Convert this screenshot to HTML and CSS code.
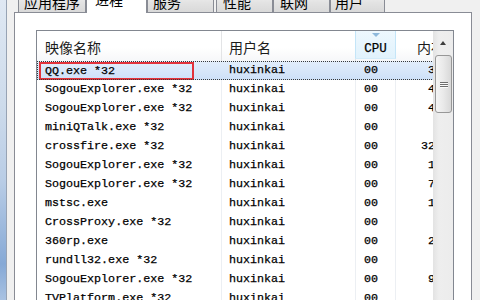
FILE: index.html
```html
<!DOCTYPE html>
<html>
	<head>
		<meta charset="utf-8">
		<title>Windows 任务管理器 - 进程</title>
		<link rel="stylesheet" href="styles.css">
	</head>
	<body>
		<div class="frame"></div>

		<div class="window">

			<div class="tabs">
				<div class="tab t1">应用程序</div>
				<div class="tab t2 active">进程</div>
				<div class="tab t3">服务</div>
				<div class="tab t4">性能</div>
				<div class="tab t5">联网</div>
				<div class="tab t6">用户</div>
			</div>

			<div class="panel">
				<div class="listview">

					<div class="lv-main">
						<div class="lv-head">
							<div class="hcell">映像名称</div>
							<div class="hcell">用户名</div>
							<div class="hcell sorted"><span class="sort-arrow"></span><span class="mono">CPU</span></div>
							<div class="hcell mem">内存(专用工作集)</div>
						</div>

						<div class="lv-body">
							<div class="row sel">
								<div class="cell name"><span class="mark">QQ.exe *32</span></div>
								<div class="cell">huxinkai</div>
								<div class="cell">00</div>
								<div class="cell num">3,416 K</div>
							</div>
							<div class="row">
								<div class="cell name">SogouExplorer.exe *32</div>
								<div class="cell">huxinkai</div>
								<div class="cell">00</div>
								<div class="cell num">4,028 K</div>
							</div>
							<div class="row">
								<div class="cell name">SogouExplorer.exe *32</div>
								<div class="cell">huxinkai</div>
								<div class="cell">00</div>
								<div class="cell num">4,552 K</div>
							</div>
							<div class="row">
								<div class="cell name">miniQTalk.exe *32</div>
								<div class="cell">huxinkai</div>
								<div class="cell">00</div>
								<div class="cell num">812 K</div>
							</div>
							<div class="row">
								<div class="cell name">crossfire.exe *32</div>
								<div class="cell">huxinkai</div>
								<div class="cell">00</div>
								<div class="cell num">32,860 K</div>
							</div>
							<div class="row">
								<div class="cell name">SogouExplorer.exe *32</div>
								<div class="cell">huxinkai</div>
								<div class="cell">00</div>
								<div class="cell num">1,904 K</div>
							</div>
							<div class="row">
								<div class="cell name">SogouExplorer.exe *32</div>
								<div class="cell">huxinkai</div>
								<div class="cell">00</div>
								<div class="cell num">7,236 K</div>
							</div>
							<div class="row">
								<div class="cell name">mstsc.exe</div>
								<div class="cell">huxinkai</div>
								<div class="cell">00</div>
								<div class="cell num">1,108 K</div>
							</div>
							<div class="row">
								<div class="cell name">CrossProxy.exe *32</div>
								<div class="cell">huxinkai</div>
								<div class="cell">00</div>
								<div class="cell num">644 K</div>
							</div>
							<div class="row">
								<div class="cell name">360rp.exe</div>
								<div class="cell">huxinkai</div>
								<div class="cell">00</div>
								<div class="cell num">2,372 K</div>
							</div>
							<div class="row">
								<div class="cell name">rundll32.exe *32</div>
								<div class="cell">huxinkai</div>
								<div class="cell">00</div>
								<div class="cell num">528 K</div>
							</div>
							<div class="row">
								<div class="cell name">SogouExplorer.exe *32</div>
								<div class="cell">huxinkai</div>
								<div class="cell">00</div>
								<div class="cell num">9,540 K</div>
							</div>
							<div class="row">
								<div class="cell name">TVPlatform.exe *32</div>
								<div class="cell">huxinkai</div>
								<div class="cell">00</div>
								<div class="cell num">716 K</div>
							</div>
						</div>
					</div>

					<div class="vscroll">
						<div class="sb-up"><span class="sb-arrow"></span></div>
						<div class="sb-thumb">
							<span class="grip"></span>
							<span class="grip"></span>
							<span class="grip"></span>
						</div>
					</div>

				</div>
			</div>

		</div>
	</body>
</html>
```

FILE: styles.css
```css
*{
	box-sizing: border-box;
}
html, body{
	margin: 0;
	padding: 0;
}
body{
	width: 480px;
	height: 300px;
	overflow: hidden;
	display: flex;
	background: #f0f0f0;
	font-family: "Noto Sans CJK SC", sans-serif;
}

/* aero glass edge on the left */
.frame{
	width: 7px;
	flex: none;
	border-right: 1px solid #97a3b4;
	background: linear-gradient(to bottom, #dfe8f3 0%, #cddbeb 35%, #b9cde6 60%, #86a9d6 88%, #a9c2e2 100%);
}

.window{
	flex: 1;
	display: flex;
	flex-direction: column;
	padding: 0 8px 0 7px;
	background: #f0f0f0;
	overflow: hidden;
}

/* ---- tabs ---- */
.tabs{
	display: flex;
	align-items: flex-end;
	height: 23px;
	margin-top: -10px;
	margin-bottom: -1px;
	padding-left: 4px;
	position: relative;
	z-index: 2;
	flex: none;
}
.tab{
	height: 20px;
	margin-bottom: 1px;
	padding-left: 5px;
	padding-top: 1px;
	border: 1px solid #898c95;
	border-bottom: none;
	border-radius: 2px 2px 0 0;
	background: linear-gradient(to bottom, #f2f2f2, #e3e3e3 50%, #d9d9d9);
	font-size: 14px;
	line-height: 16px;
	color: #000;
	white-space: nowrap;
	overflow: hidden;
}
.tab.active{
	height: 23px;
	margin-bottom: 0;
	padding-left: 8px;
	padding-top: 0;
	background: #fff;
}
.t1{ width: 68px; }
.t2{ width: 61px; }
.t3{ width: 67px; }
.t4{ width: 57px; margin-left: 2px; padding-left: 6px; }
.t5{ width: 57px; padding-left: 6px; }
.t6{ width: 55px; padding-left: 4px; }

/* ---- tab page ---- */
.panel{
	flex: 1;
	border: 1px solid #898c95;
	background: #fff;
	padding: 17px 17px 0 21px;
	position: relative;
	z-index: 1;
}

.listview{
	display: flex;
	height: 300px;
	border: 1px solid #828790;
	background: #fff;
}
.lv-main{
	flex: 1;
	overflow: hidden;
}

.lv-head, .row{
	display: grid;
	grid-template-columns: 185px 134px 40px 94px;
	width: 453px;
}
.lv-head{
	height: 30px;
	background: linear-gradient(to bottom, #fff 55%, #f6f7f9);
}
.hcell{
	display: flex;
	align-items: center;
	padding-left: 8px;
	padding-top: 2px;
	border-right: 1px solid #e3e4e6;
	font-size: 14px;
	color: #1b1b1b;
	white-space: nowrap;
	overflow: hidden;
}
.hcell:nth-child(2){
	padding-left: 7px;
}
.hcell.sorted{
	flex-direction: column;
	align-items: center;
	justify-content: flex-start;
	padding: 0;
	height: 28px;
	background: linear-gradient(to bottom, #eef8fe, #e1f2fc);
	border-left: 1px solid #c4e5f8;
	border-right: 1px solid #c4e5f8;
	border-bottom: 1px solid #d4ecfa;
	margin-left: -1px;
}
.sort-arrow{
	width: 0;
	height: 0;
	margin-top: 2px;
	border-left: 4px solid transparent;
	border-right: 4px solid transparent;
	border-top: 4px solid #8eb9dc;
}
.mono{
	font-family: "Liberation Mono", monospace;
	font-size: 12.5px;
	margin-top: 5px;
	color: #000;
	-webkit-text-stroke: 0.25px #000;
}
.hcell.mem{
	padding-left: 21px;
	border-right: none;
}

/* ---- rows ---- */
.row{
	height: 19px;
	font-family: "Liberation Mono", monospace;
	font-size: 11.7px;
	line-height: 19px;
	color: #000;
	-webkit-text-stroke: 0.25px #000;
}
.cell{
	padding-left: 8px;
	border-right: 1px solid #eceff3;
	white-space: nowrap;
	overflow: hidden;
}
.cell:nth-child(2){
	padding-left: 7px;
}
.cell.num{
	text-align: right;
	padding-right: 13px;
	border-right: none;
}
.row.sel{
	background: linear-gradient(to bottom, #e3eefb, #cde0f8);
	outline: 1px dotted #3a3a3a;
	outline-offset: -1px;
}
.row.sel .cell{
	border-right-color: transparent;
}
.row.sel .cell.name{
	padding-left: 2px;
	padding-top: 1px;
	overflow: visible;
}

/* red marking around the selected name */
.mark{
	display: block;
	width: 155px;
	height: 18px;
	padding-left: 4px;
	border: 2px solid #e2323a;
	line-height: 14px;
}

/* ---- scrollbar ---- */
.vscroll{
	width: 20px;
	flex: none;
	background: linear-gradient(to right, #e3e3e3, #eeeeee 30%, #ececec);
}
.sb-up{
	height: 23px;
	display: flex;
	align-items: center;
	justify-content: center;
}
.sb-arrow{
	width: 0;
	height: 0;
	border-left: 3.5px solid transparent;
	border-right: 3.5px solid transparent;
	border-bottom: 4px solid #3d3d3d;
}
.sb-thumb{
	height: 58px;
	margin: 1px 1px 0 2px;
	border: 1px solid #979797;
	border-radius: 3px;
	background: linear-gradient(to right, #f5f5f5, #e9e9e9 50%, #d8d8d8);
	display: flex;
	flex-direction: column;
	align-items: center;
	justify-content: center;
	gap: 1px;
}
.grip{
	display: block;
	width: 8px;
	height: 1px;
	background: #6e6e6e;
	box-shadow: 0 1px 0 #fafafa;
}
```
